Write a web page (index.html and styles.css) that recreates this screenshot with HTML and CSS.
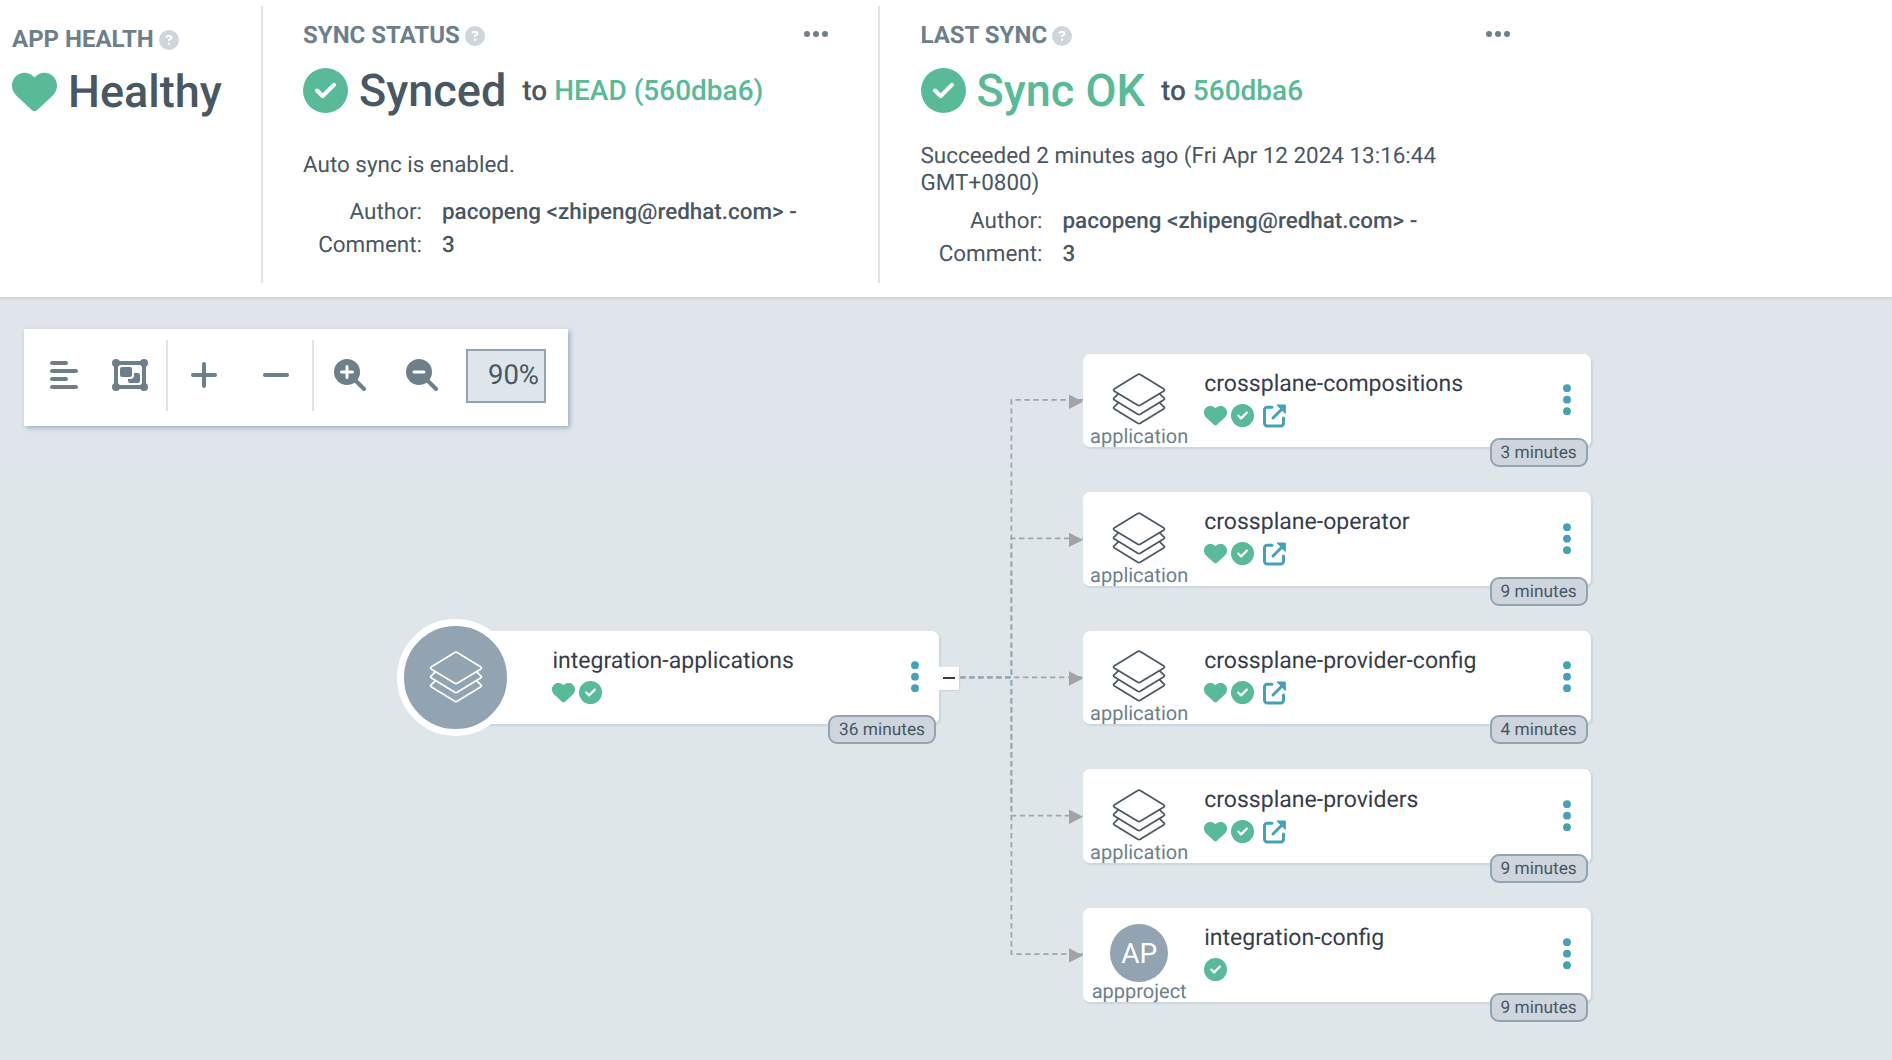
FILE: index.html
```html
<!DOCTYPE html>
<html lang="en">
<head>
<meta charset="utf-8">
<title>integration-applications</title>
<link rel="stylesheet" href="styles.css">
</head>
<body>
<svg class="defs" aria-hidden="true">
  <symbol id="heart" viewBox="0 0 512 512"><path d="M47.6 300.4L228.3 469.1c7.5 7 17.4 10.900 27.700 10.900s20.200-3.900 27.700-10.900L464.400 300.400c30.400-28.300 47.600-68 47.600-109.500v-5.800c0-69.900-50.500-129.500-119.400-141C347 36.500 300.600 51.400 268 84L256 96 244 84c-32.600-32.600-79-47.500-124.600-39.900C50.500 55.600 0 115.200 0 185.100v5.800c0 41.500 17.200 81.200 47.600 109.500z"/></symbol>
  <symbol id="check" viewBox="0 0 512 512"><path d="M256 512A256 256 0 1 0 256 0a256 256 0 1 0 0 512zM369 209L241 337c-9.400 9.400-24.600 9.400-33.900 0l-64-64c-9.400-9.400-9.400-24.600 0-33.900s24.600-9.400 33.900 0l47 47L335 175c9.400-9.400 24.600-9.400 33.900 0s9.400 24.600 0 33.900z"/></symbol>
  <symbol id="question" viewBox="0 0 512 512"><path d="M256 512A256 256 0 1 0 256 0a256 256 0 1 0 0 512zM169.800 165.300c7.900-22.300 29.100-37.300 52.800-37.300h58.300c34.900 0 63.100 28.300 63.100 63.100c0 22.600-12.100 43.500-31.700 54.800L280 264.400c-.2 13-10.900 23.600-24 23.600c-13.300 0-24-10.700-24-24V250.500c0-8.600 4.600-16.500 12.100-20.800l44.300-25.400c4.700-2.700 7.600-7.700 7.600-13.100c0-8.400-6.800-15.100-15.100-15.100H222.600c-3.400 0-6.400 2.100-7.500 5.300l-.4 1.200c-4.400 12.500-18.200 19-30.600 14.600s-19-18.200-14.600-30.600l.4-1.200zM224 352a32 32 0 1 1 64 0 32 32 0 1 1-64 0z"/></symbol>
  <symbol id="dots" viewBox="0 0 24 6"><circle cx="3" cy="3" r="3"/><circle cx="12" cy="3" r="3"/><circle cx="21" cy="3" r="3"/></symbol>
  <symbol id="kebab" viewBox="0 0 8 32"><circle cx="4" cy="4.200" r="3.900"/><circle cx="4" cy="15.700" r="3.900"/><circle cx="4" cy="27.200" r="3.900"/></symbol>
  <symbol id="external" viewBox="0 0 23 24"><path d="M9 3.300H4.200A2.700 2.700 0 0 0 1.500 6v13.300A2.700 2.700 0 0 0 4.200 22h13.600a2.700 2.700 0 0 0 2.700-2.700V14" fill="none" stroke="currentColor" stroke-width="3" stroke-linecap="round"/><path d="M10 14L20 4" fill="none" stroke="currentColor" stroke-width="3" stroke-linecap="round"/><path d="M14 1h8.300v8.500z" stroke="currentColor" stroke-width="1" stroke-linejoin="round"/></symbol>
  <symbol id="layers" viewBox="0 0 54 52"><g fill="none" stroke="currentColor" stroke-width="1.700" stroke-linejoin="round"><path d="M25.800 1.500L2.500 15.800q-2 1.200 0 2.400L25.800 32.300q1.200.7 2.400 0L51.500 18.200q2-1.200 0-2.400L28.200 1.500q-1.200-.7-2.400 0z"/><path d="M6.500 20.600L2.500 24.600q-2 1.200 0 2.400L25.800 41.300q1.200.7 2.400 0L51.500 27q2-1.200 0-2.400L47.500 20.600"/><path d="M6.500 29.600L2.500 33.600q-2 1.200 0 2.400L25.800 50.300q1.200.7 2.400 0L51.500 36q2-1.200 0-2.400L47.500 29.600"/></g></symbol>
</svg>

<header class="status">
  <section class="panel panel-health">
    <h2 class="label">APP HEALTH <svg class="help"><use href="#question"/></svg></h2>
    <div class="value"><svg class="value-icon"><use href="#heart"/></svg><span class="value-text">Healthy</span></div>
  </section>
  <section class="panel panel-sync">
    <h2 class="label">SYNC STATUS <svg class="help"><use href="#question"/></svg><svg class="more"><use href="#dots"/></svg></h2>
    <div class="value"><svg class="value-icon"><use href="#check"/></svg><span class="value-text">Synced</span><span class="revision">to <a>HEAD (560dba6)</a></span></div>
    <p class="note">Auto sync is enabled.</p>
    <dl class="meta">
      <dt>Author:</dt><dd>pacopeng &lt;zhipeng@redhat.com&gt; -</dd>
      <dt>Comment:</dt><dd>3</dd>
    </dl>
  </section>
  <section class="panel panel-last">
    <h2 class="label">LAST SYNC <svg class="help"><use href="#question"/></svg><svg class="more"><use href="#dots"/></svg></h2>
    <div class="value ok"><svg class="value-icon"><use href="#check"/></svg><span class="value-text">Sync OK</span><span class="revision">to <a>560dba6</a></span></div>
    <p class="note">Succeeded 2 minutes ago (Fri Apr 12 2024 13:16:44 GMT+0800)</p>
    <dl class="meta">
      <dt>Author:</dt><dd>pacopeng &lt;zhipeng@redhat.com&gt; -</dd>
      <dt>Comment:</dt><dd>3</dd>
    </dl>
  </section>
</header>

<main class="canvas">
  <div class="toolbar">
    <div class="group group-view">
      <svg width="28" height="28" viewBox="0 0 28 28"><path d="M2 2h14M2 10h24M2 18h14M2 26h24" fill="none" stroke="currentColor" stroke-width="4" stroke-linecap="round"/></svg>
      <svg width="36" height="32" viewBox="0 0 36 32"><path d="M4 4h28v24H4z" fill="none" stroke="currentColor" stroke-width="4"/><circle cx="4" cy="4" r="4"/><circle cx="32" cy="4" r="4"/><circle cx="4" cy="28" r="4"/><circle cx="32" cy="28" r="4"/><rect x="8" y="8" width="12" height="10" rx="2"/><path d="M22 14h4a2 2 0 0 1 2 2v6a2 2 0 0 1-2 2h-8a2 2 0 0 1-2-2v-2h2a4 4 0 0 0 4-4z"/></svg>
    </div>
    <div class="group group-expand">
      <svg width="26" height="26" viewBox="0 0 26 26"><path d="M13 2v22M2 13h22" fill="none" stroke="currentColor" stroke-width="4" stroke-linecap="round"/></svg>
      <svg width="26" height="26" viewBox="0 0 26 26"><path d="M2 13h22" fill="none" stroke="currentColor" stroke-width="4" stroke-linecap="round"/></svg>
    </div>
    <div class="group group-zoom">
      <svg width="32" height="32" viewBox="0 0 32 32"><circle cx="13" cy="13" r="13"/><path d="M20 20l10 10" stroke="currentColor" stroke-width="4" stroke-linecap="round"/><path d="M13 7.500v11M7.500 13h11" stroke="#fff" stroke-width="3" stroke-linecap="round"/></svg>
      <svg width="32" height="32" viewBox="0 0 32 32"><circle cx="13" cy="13" r="13"/><path d="M20 20l10 10" stroke="currentColor" stroke-width="4" stroke-linecap="round"/><path d="M8 13h10" stroke="#fff" stroke-width="3" stroke-linecap="round"/></svg>
      <span class="zoom-value">90%</span>
    </div>
  </div>

  <svg class="edges" width="1892" height="763" viewBox="0 297 1892 763">
    <g fill="none" stroke="#98a8b4" stroke-width="1.800" stroke-dasharray="5.400 3.600">
      <path d="M960 677.400H1011.400V399.800H1083"/>
      <path d="M960 677.400H1011.400V538.400H1083"/>
      <path d="M960 677.400H1083"/>
      <path d="M960 677.400H1011.400V815.600H1083"/>
      <path d="M960 677.400H1011.400V954.200H1083"/>
    </g>
    <g fill="#a1a3a5">
      <path d="M1069 394.500l14 7.200-14 7.200z"/><path d="M1069 532.700l14 7.200-14 7.200z"/><path d="M1069 671.300l14 7.200-14 7.200z"/><path d="M1069 809.500l14 7.200-14 7.200z"/><path d="M1069 948.200l14 7.200-14 7.200z"/>
    </g>
  </svg>

  <article class="node root">
    <div class="badge-circle"><svg class="layers"><use href="#layers"/></svg></div>
    <div class="info"><div class="name">integration-applications</div><div class="icons"><svg><use href="#heart"/></svg><svg><use href="#check"/></svg></div></div>
    <svg class="kebab"><use href="#kebab"/></svg>
    <span class="toggle"></span>
    <span class="age">36 minutes</span>
  </article>

  <article class="node n1">
    <div class="kind"><svg class="layers"><use href="#layers"/></svg><span>application</span></div>
    <div class="info"><div class="name">crossplane-compositions</div><div class="icons"><svg><use href="#heart"/></svg><svg><use href="#check"/></svg><svg class="link"><use href="#external"/></svg></div></div>
    <svg class="kebab"><use href="#kebab"/></svg>
    <span class="age">3 minutes</span>
  </article>
  <article class="node n2">
    <div class="kind"><svg class="layers"><use href="#layers"/></svg><span>application</span></div>
    <div class="info"><div class="name">crossplane-operator</div><div class="icons"><svg><use href="#heart"/></svg><svg><use href="#check"/></svg><svg class="link"><use href="#external"/></svg></div></div>
    <svg class="kebab"><use href="#kebab"/></svg>
    <span class="age">9 minutes</span>
  </article>
  <article class="node n3">
    <div class="kind"><svg class="layers"><use href="#layers"/></svg><span>application</span></div>
    <div class="info"><div class="name">crossplane-provider-config</div><div class="icons"><svg><use href="#heart"/></svg><svg><use href="#check"/></svg><svg class="link"><use href="#external"/></svg></div></div>
    <svg class="kebab"><use href="#kebab"/></svg>
    <span class="age">4 minutes</span>
  </article>
  <article class="node n4">
    <div class="kind"><svg class="layers"><use href="#layers"/></svg><span>application</span></div>
    <div class="info"><div class="name">crossplane-providers</div><div class="icons"><svg><use href="#heart"/></svg><svg><use href="#check"/></svg><svg class="link"><use href="#external"/></svg></div></div>
    <svg class="kebab"><use href="#kebab"/></svg>
    <span class="age">9 minutes</span>
  </article>
  <article class="node n5">
    <div class="kind"><div class="initials">AP</div><span>appproject</span></div>
    <div class="info"><div class="name">integration-config</div><div class="icons"><svg><use href="#check"/></svg></div></div>
    <svg class="kebab"><use href="#kebab"/></svg>
    <span class="age">9 minutes</span>
  </article>
</main>
</body>
</html>
```
FILE: styles.css
```css
* { box-sizing: border-box; }
body {
  margin: 0;
  width: 1892px;
  height: 1060px;
  overflow: hidden;
  font-family: Roboto, "Liberation Sans", sans-serif;
  color: #495763;
  background: #dee6e9;
  text-rendering: geometricPrecision;
}
svg { display: block; fill: currentColor; flex: none; }
.defs { position: absolute; width: 0; height: 0; }

/* status bar */
.status {
  display: flex;
  height: 297px;
  padding-top: 6px;
  background: #fff;
}
.panel { height: 277px; padding-top: 15px; }
.panel-health { width: 261px; padding: 19px 0 0 12px; }
.panel-sync { width: 617px; border-left: 2px solid #dee6eb; padding-left: 40px; }
.panel-last { width: 680px; border-left: 2px solid #dee6eb; padding-left: 40.500px; }
.label {
  display: flex;
  align-items: center;
  margin: 0;
  height: 29px;
  font-size: 24px;
  font-weight: 700;
  line-height: 29px;
  color: #6d7f8b;
}
.help { width: 20px; height: 20px; margin: 0 0 0 5px; color: #ced5db; }
.more { width: 24px; height: 6px; margin: -4px 50px 0 auto; }
.panel-last .more { margin-right: 48px; }
.value {
  display: flex;
  align-items: center;
  height: 56px;
  margin-top: 12px;
  font-weight: 500;
}
.panel-health .value { margin-top: 10px; }
.panel-health .value-icon { margin-top: -1px; }
.value-icon { width: 45px; height: 45px; color: #58ba97; }
.value-text { margin: 2px 0 0 11px; font-size: 45px; line-height: 56px; }
.panel-health .value-text { margin-top: 0; }
.ok .value-text { color: #58ba97; }
.revision { margin: 1px 0 0 16px; font-size: 28px; line-height: 56px; }
.revision a { color: #58ba97; }
.note { margin: 34px 0 0; font-size: 22.450px; line-height: 27px; }
.panel-last .note { width: 540px; margin-top: 25px; }
.meta {
  display: grid;
  grid-template-columns: 119px 1fr;
  column-gap: 20px;
  margin: 17px 0 0;
  font-size: 22.450px;
  line-height: 33px;
}
.panel-last .meta { grid-template-columns: 122px 1fr; margin-top: 8px; }
.meta dt { text-align: right; }
.meta dd { margin: 0; font-weight: 500; }

/* resource tree */
.canvas {
  position: relative;
  height: 763px;
  padding: 32px 0 0 24px;
  background: linear-gradient(#cfd5de 0, #d4d9e1 2px, #e0e5ec 4px, #e0e5ed 164px, #dee6e9 164px);
}
.toolbar {
  display: flex;
  width: 544px;
  height: 97px;
  padding-top: 11px;
  background: #fff;
  color: #6d7f8b;
  box-shadow: 2px 2px 5px #9caebb;
}
.group { display: flex; align-items: center; height: 71px; padding-bottom: 1px; }
.group-view { width: 142px; padding-left: 26px; gap: 34px; }
.group-expand { width: 148px; border-left: 2px solid #dee6eb; border-right: 2px solid #dee6eb; padding-left: 23px; gap: 46px; }
.group-zoom { padding-left: 20px; gap: 40px; }
.zoom-value {
  width: 80px;
  height: 54px;
  margin: 2px 0 0 -12px;
  padding-right: 5px;
  border: 2px solid #8fa4b1;
  background: #dee6eb;
  color: #495763;
  font-size: 27.500px;
  line-height: 47px;
  text-align: right;
}
.edges { position: absolute; left: 0; top: 0; }

.node {
  position: absolute;
  left: 1083.200px;
  display: flex;
  width: 507.600px;
  height: 93.600px;
  border-radius: 7px;
  background: #fff;
  box-shadow: 1.800px 1.800px 1.800px #ccd6dd;
}
.n1 { top: 56.600px; }
.n2 { top: 195.200px; }
.n3 { top: 333.800px; }
.n4 { top: 472.400px; }
.n5 { top: 611px; }
.root { left: 431.400px; top: 333.800px; }
.kind {
  display: flex;
  flex-direction: column;
  align-items: center;
  width: 112px;
  padding-top: 19.500px;
  color: #6d7f8b;
  font-size: 20px;
  line-height: 23.500px;
}
.layers { width: 54px; height: 52px; color: #495763; }
.initials {
  width: 58px;
  height: 58px;
  margin: -4px 0 -2px;
  border-radius: 50%;
  background: #92a3b1;
  color: #fff;
  font-size: 28px;
  line-height: 59px;
  text-align: center;
}
.info { flex: 1; padding: 16.200px 0 0 9px; }
.name { color: #363c4a; font-size: 23.050px; line-height: 28px; }
.icons { display: flex; gap: 4px; margin-top: 6px; color: #58ba97; }
.icons svg { width: 23px; height: 23px; }
.icons .link { height: 24px; margin-left: 5px; color: #45a1b5; }
.kebab { width: 8px; height: 32px; margin: 30.400px 20px 0 0; color: #45a1b5; }
.age {
  position: absolute;
  right: 3px;
  bottom: -20px;
  height: 29px;
  padding: 0 9px;
  border: 2px solid #92a3b1;
  border-radius: 9px;
  background: #ced5dd;
  font-size: 17.300px;
  line-height: 26px;
}
.badge-circle {
  display: flex;
  align-items: center;
  justify-content: center;
  width: 117px;
  height: 117px;
  margin: -12.200px 0 0 -34px;
  border: 7px solid #fff;
  border-radius: 50%;
  background: #92a3b1;
}
.badge-circle .layers { color: #fff; }
.root .info { padding-left: 38px; }
.toggle {
  position: absolute;
  right: -20px;
  top: 36px;
  width: 20px;
  height: 23px;
  background: #fff;
  box-shadow: 1px 1px 1px #ccd6dd;
}
.toggle::after {
  content: "";
  position: absolute;
  left: 4px;
  top: 10px;
  width: 12px;
  height: 2px;
  background: #363c4a;
}
```
